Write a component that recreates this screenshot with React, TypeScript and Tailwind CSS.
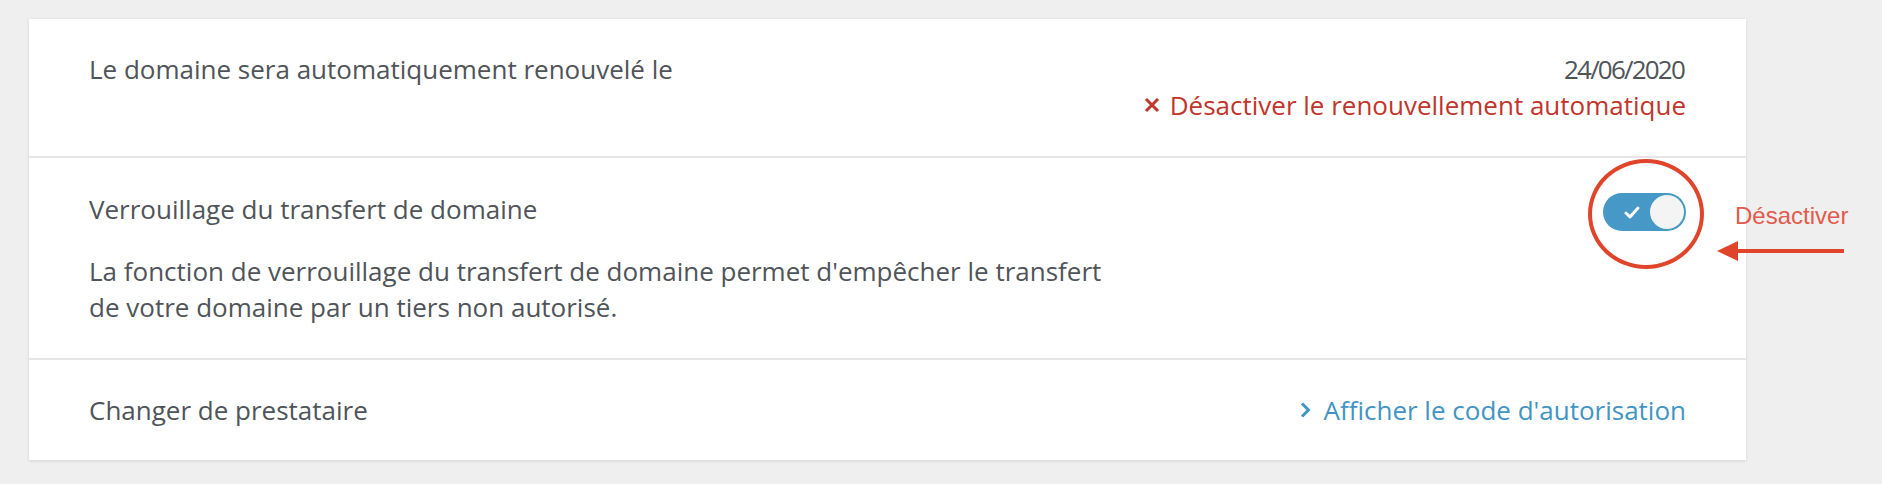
import { useState } from 'react';

const textFont = { fontFamily: '"Open Sans", "Noto Sans", sans-serif' };

function Toggle({ on, onChange }: { on: boolean; onChange: (v: boolean) => void }) {
  return (
    <button
      type="button"
      onClick={() => onChange(!on)}
      className={`relative flex h-[38px] w-[83px] shrink-0 items-center rounded-full ${on ? 'bg-[#4698c6]' : 'bg-[#cfd3d6]'}`}
    >
      <svg width="16" height="13" viewBox="0 0 16 13" className="ml-[21px]" fill="none">
        <path d="M2 7 L6 11 L14 2" stroke="#ffffff" strokeWidth="3" strokeLinecap="round" strokeLinejoin="round" />
      </svg>
      <span className="absolute right-[2px] top-[2px] h-[34px] w-[34px] rounded-full bg-[#f4f4f4]" />
    </button>
  );
}

export default function App() {
  const [locked, setLocked] = useState(true);

  return (
    <div className="relative min-h-[484px] bg-[#efefef] pl-[29px] pt-[19px]" style={textFont}>
      <div className="w-[1717px] bg-white text-[26px] leading-[36px] text-[#4f5459] shadow-[0_1px_3px_rgba(0,0,0,0.12)]">
        <div className="flex justify-between border-b-2 border-[#e6e6e6] px-[60px] pb-[33px] pt-[32px]">
          <div>Le domaine sera automatiquement renouvelé le</div>
          <div className="flex flex-col items-end">
            <div className="pr-[2px] tracking-[-1.8px]">24/06/2020</div>
            <a href="#" className="flex items-center text-[#c1352b]">
              <svg width="16" height="16" viewBox="0 0 16 16" className="mr-[10px]" fill="none">
                <path d="M2 2 L14 14 M14 2 L2 14" stroke="#c1352b" strokeWidth="3" />
              </svg>
              Désactiver le renouvellement automatique
            </a>
          </div>
        </div>

        <div className="flex justify-between border-b-2 border-[#e6e6e6] px-[60px] pb-[33px] pt-[33px]">
          <div className="max-w-[1030px]">
            <div>Verrouillage du transfert de domaine</div>
            <p className="mt-[26px]">
              La fonction de verrouillage du transfert de domaine permet d'empêcher le transfert de votre domaine par un tiers non autorisé.
            </p>
          </div>
          <div className="pt-[2px]">
            <Toggle on={locked} onChange={setLocked} />
          </div>
        </div>

        <div className="flex justify-between px-[60px] py-[32px]">
          <div>Changer de prestataire</div>
          <a href="#" className="flex items-center text-[#4295c3]">
            <svg width="11" height="16" viewBox="0 0 11 16" className="mr-[13px]" fill="none">
              <path d="M2 1.5 L8.5 8 L2 14.5" stroke="#4295c3" strokeWidth="3" />
            </svg>
            Afficher le code d'autorisation
          </a>
        </div>
      </div>

      {/* annotation overlay */}
      <div className="absolute left-[1588px] top-[159px] h-[110px] w-[116px] rounded-[50%] border-4 border-[#e0452b]" />
      <div
        className="absolute left-[1735px] top-[204px] text-[24px] leading-[24px] text-[#e35a4d]"
        style={{ fontFamily: '"Liberation Sans", Arial, sans-serif' }}
      >
        Désactiver
      </div>
      <svg className="absolute left-[1716px] top-[240px]" width="130" height="22" viewBox="0 0 130 22">
        <path d="M1 11 L22 1 L22 21 Z" fill="#e0452b" />
        <path d="M20 11 L128 11" stroke="#e0452b" strokeWidth="4" />
      </svg>
    </div>
  );
}
